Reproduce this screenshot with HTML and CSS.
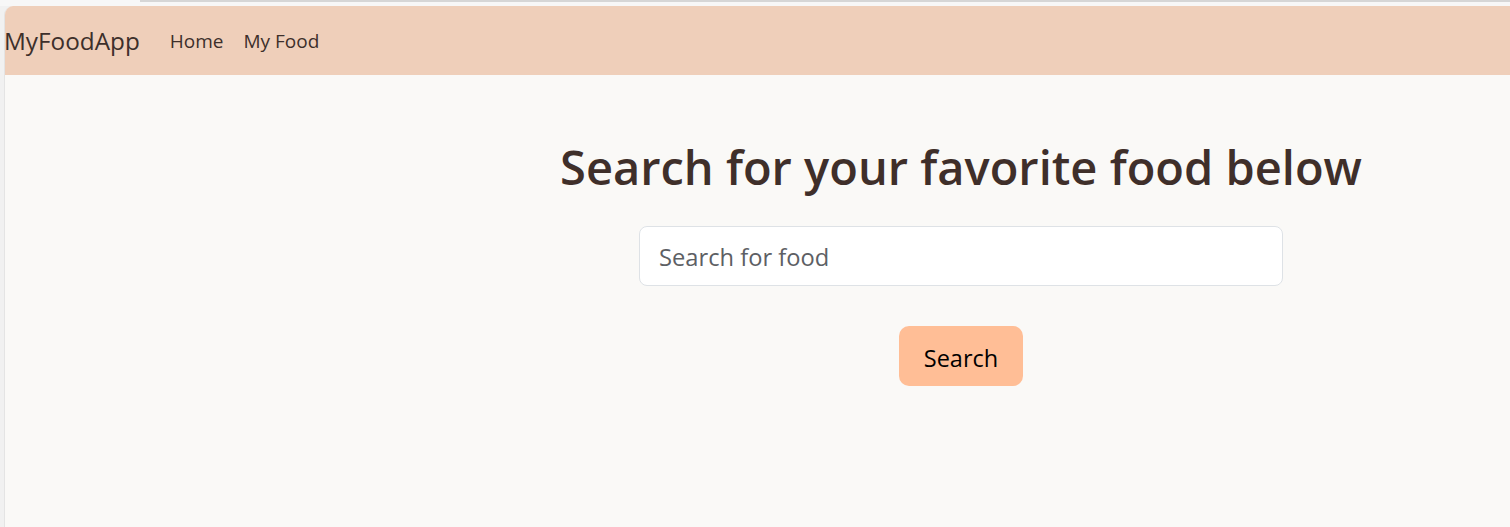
FILE: index.html
```html
<!DOCTYPE html>
<html lang="en">
<head>
<meta charset="utf-8">
<title>MyFoodApp</title>
<link rel="stylesheet" href="styles.css">
</head>
<body>
  <div class="chrome-top"><div class="chrome-line"></div></div>
  <div class="window">
    <nav class="navbar">
      <a class="brand" href="#">MyFoodApp</a>
      <ul class="nav-links">
        <li><a href="#">Home</a></li>
        <li><a href="#">My Food</a></li>
      </ul>
    </nav>
    <main class="main">
      <section class="search-block">
        <h1 class="title">Search for your favorite food below</h1>
        <input class="search-input" type="text" placeholder="Search for food">
        <button class="search-btn" type="button">Search</button>
      </section>
    </main>
  </div>
</body>
</html>
```

FILE: styles.css
```css
* { box-sizing: border-box; }
html, body { margin: 0; padding: 0; height: 100%; }
body {
  background: #f1f1f1;
  font-family: "Open Sans", "Noto Sans", sans-serif;
  display: flex;
  flex-direction: column;
  overflow: hidden;
}
.chrome-top {
  height: 6px;
  background: #f7f7f7;
  flex: none;
}
.chrome-line {
  margin-left: 140px;
  height: 2px;
  background: #d6d6d6;
}
.window {
  flex: 1;
  margin-left: 4px;
  border-top-left-radius: 9px;
  overflow: hidden;
  background: #faf9f7;
  border-left: 1px solid #e4e4e4;
  display: flex;
  flex-direction: column;
}
.navbar {
  height: 69px;
  background: #efcfba;
  display: flex;
  align-items: center;
  flex: none;
}
.brand {
  font-size: 24.3px;
  color: #3d2f2b;
  text-decoration: none;
  margin-right: 20px;
  margin-left: -1px;
}
.nav-links {
  list-style: none;
  margin: 0;
  padding: 0;
  display: flex;
}
.nav-links a {
  display: block;
  padding: 0 10px;
  font-size: 19px;
  color: #3d2f2b;
  text-decoration: none;
}
.main { flex: 1; }
.search-block {
  width: 900px;
  margin-left: 506px;
  display: flex;
  flex-direction: column;
  align-items: center;
  padding-top: 62px;
}
.title {
  margin: 0 0 29px;
  font-size: 47px;
  font-weight: 600;
  color: #3f2f2a;
  line-height: 60px;
}
.search-input {
  width: 644px;
  height: 60px;
  border: 1px solid #dee2e6;
  border-radius: 8px;
  background: #fff;
  padding: 2px 19px 0;
  font-family: inherit;
  font-size: 23.7px;
  color: #333;
  outline: none;
}
.search-input::placeholder { color: #5d6064; opacity: 1; }
.search-btn {
  margin-top: 40px;
  width: 124px;
  height: 60px;
  border: none;
  border-radius: 10px;
  background: #ffbe96;
  color: #000;
  font-family: inherit;
  font-size: 23.5px;
  padding: 4px 0 0;
  cursor: pointer;
}
```
